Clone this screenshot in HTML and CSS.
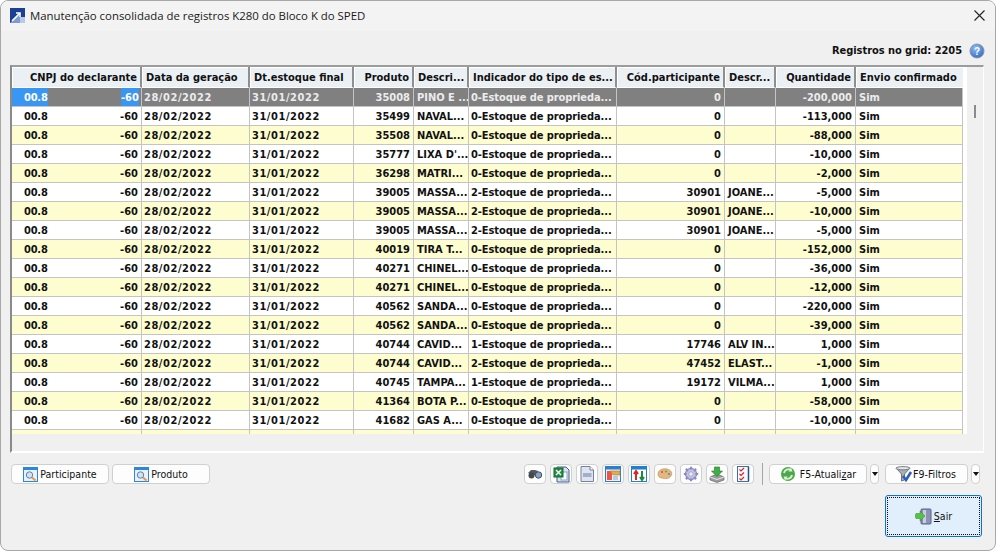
FILE: index.html
```html
<!DOCTYPE html>
<html lang="pt-BR">
<head>
<meta charset="utf-8">
<title>Manutenção consolidada</title>
<link rel="stylesheet" href="styles.css">
</head>
<body>
<div class="window">
  <header class="titlebar">
    <svg class="app-icon" width="15" height="15" viewBox="0 0 15 15"><rect width="15" height="15" fill="#1c3f94"/><path d="M0 15 L8 7 L10 9 L15 15Z" fill="#7f9bd0"/><path d="M2 13 L9 6 M6 5 H10 V9" stroke="#fff" stroke-width="1.6" fill="none"/><rect x="10" y="9" width="5" height="6" fill="#b9c8e6"/></svg>
    <span class="title">Manutenção consolidada de registros K280 do Bloco K do SPED</span>
    <svg class="close" width="11" height="11" viewBox="0 0 11 11"><path d="M.5 .5 L10.5 10.5 M10.5 .5 L.5 10.5" stroke="#222" stroke-width="1.1"/></svg>
  </header>
  <div class="info">
    <span class="count">Registros no grid: 2205</span>
    <svg width="16" height="16" viewBox="0 0 16 16"><defs><radialGradient id="hb" cx=".4" cy=".3" r=".8"><stop offset="0" stop-color="#8fc0f5"/><stop offset="1" stop-color="#2a62c0"/></radialGradient></defs><circle cx="8" cy="8" r="7" fill="url(#hb)" stroke="#8a94a5"/><text x="8" y="11.5" class="help-q">?</text></svg>
  </div>
  <div class="grid-frame">
    <div class="grid-view">
      <table class="grid">
        <colgroup><col class="c1"><col class="c2"><col class="c3"><col class="c4"><col class="c5"><col class="c6"><col class="c7"><col class="c8"><col class="c9"><col class="c10"></colgroup>
        <thead>
          <tr><th class="r">CNPJ do declarante</th><th>Data da geração</th><th>Dt.estoque final</th><th class="r">Produto</th><th>Descri...</th><th>Indicador do tipo de es...</th><th class="r">Cód.participante</th><th>Descr...</th><th class="r">Quantidade</th><th>Envio confirmado</th></tr>
        </thead>
        <tbody>
          <tr class="sel"><td class="cnpj"><span class="m a">00.8</span><span class="m b">-60</span></td><td class="d">28/02/2022</td><td class="d">31/01/2022</td><td class="r">35008</td><td>PINO E ...</td><td class="k">0-Estoque de proprieda...</td><td class="r">0</td><td></td><td class="r">-200,000</td><td>Sim</td></tr>
          <tr><td class="cnpj"><span class="m a">00.8</span><span class="m b">-60</span></td><td class="d">28/02/2022</td><td class="d">31/01/2022</td><td class="r">35499</td><td>NAVAL...</td><td class="k">0-Estoque de proprieda...</td><td class="r">0</td><td></td><td class="r">-113,000</td><td>Sim</td></tr>
          <tr class="y"><td class="cnpj"><span class="m a">00.8</span><span class="m b">-60</span></td><td class="d">28/02/2022</td><td class="d">31/01/2022</td><td class="r">35508</td><td>NAVAL...</td><td class="k">0-Estoque de proprieda...</td><td class="r">0</td><td></td><td class="r">-88,000</td><td>Sim</td></tr>
          <tr><td class="cnpj"><span class="m a">00.8</span><span class="m b">-60</span></td><td class="d">28/02/2022</td><td class="d">31/01/2022</td><td class="r">35777</td><td>LIXA D'...</td><td class="k">0-Estoque de proprieda...</td><td class="r">0</td><td></td><td class="r">-10,000</td><td>Sim</td></tr>
          <tr class="y"><td class="cnpj"><span class="m a">00.8</span><span class="m b">-60</span></td><td class="d">28/02/2022</td><td class="d">31/01/2022</td><td class="r">36298</td><td>MATRI...</td><td class="k">0-Estoque de proprieda...</td><td class="r">0</td><td></td><td class="r">-2,000</td><td>Sim</td></tr>
          <tr><td class="cnpj"><span class="m a">00.8</span><span class="m b">-60</span></td><td class="d">28/02/2022</td><td class="d">31/01/2022</td><td class="r">39005</td><td>MASSA...</td><td class="k">2-Estoque de proprieda...</td><td class="r">30901</td><td>JOANE...</td><td class="r">-5,000</td><td>Sim</td></tr>
          <tr class="y"><td class="cnpj"><span class="m a">00.8</span><span class="m b">-60</span></td><td class="d">28/02/2022</td><td class="d">31/01/2022</td><td class="r">39005</td><td>MASSA...</td><td class="k">2-Estoque de proprieda...</td><td class="r">30901</td><td>JOANE...</td><td class="r">-10,000</td><td>Sim</td></tr>
          <tr><td class="cnpj"><span class="m a">00.8</span><span class="m b">-60</span></td><td class="d">28/02/2022</td><td class="d">31/01/2022</td><td class="r">39005</td><td>MASSA...</td><td class="k">2-Estoque de proprieda...</td><td class="r">30901</td><td>JOANE...</td><td class="r">-5,000</td><td>Sim</td></tr>
          <tr class="y"><td class="cnpj"><span class="m a">00.8</span><span class="m b">-60</span></td><td class="d">28/02/2022</td><td class="d">31/01/2022</td><td class="r">40019</td><td>TIRA T...</td><td class="k">0-Estoque de proprieda...</td><td class="r">0</td><td></td><td class="r">-152,000</td><td>Sim</td></tr>
          <tr><td class="cnpj"><span class="m a">00.8</span><span class="m b">-60</span></td><td class="d">28/02/2022</td><td class="d">31/01/2022</td><td class="r">40271</td><td>CHINEL...</td><td class="k">0-Estoque de proprieda...</td><td class="r">0</td><td></td><td class="r">-36,000</td><td>Sim</td></tr>
          <tr class="y"><td class="cnpj"><span class="m a">00.8</span><span class="m b">-60</span></td><td class="d">28/02/2022</td><td class="d">31/01/2022</td><td class="r">40271</td><td>CHINEL...</td><td class="k">0-Estoque de proprieda...</td><td class="r">0</td><td></td><td class="r">-12,000</td><td>Sim</td></tr>
          <tr><td class="cnpj"><span class="m a">00.8</span><span class="m b">-60</span></td><td class="d">28/02/2022</td><td class="d">31/01/2022</td><td class="r">40562</td><td>SANDA...</td><td class="k">0-Estoque de proprieda...</td><td class="r">0</td><td></td><td class="r">-220,000</td><td>Sim</td></tr>
          <tr class="y"><td class="cnpj"><span class="m a">00.8</span><span class="m b">-60</span></td><td class="d">28/02/2022</td><td class="d">31/01/2022</td><td class="r">40562</td><td>SANDA...</td><td class="k">0-Estoque de proprieda...</td><td class="r">0</td><td></td><td class="r">-39,000</td><td>Sim</td></tr>
          <tr><td class="cnpj"><span class="m a">00.8</span><span class="m b">-60</span></td><td class="d">28/02/2022</td><td class="d">31/01/2022</td><td class="r">40744</td><td>CAVID...</td><td class="k">1-Estoque de proprieda...</td><td class="r">17746</td><td>ALV IN...</td><td class="r">1,000</td><td>Sim</td></tr>
          <tr class="y"><td class="cnpj"><span class="m a">00.8</span><span class="m b">-60</span></td><td class="d">28/02/2022</td><td class="d">31/01/2022</td><td class="r">40744</td><td>CAVID...</td><td class="k">2-Estoque de proprieda...</td><td class="r">47452</td><td>ELAST...</td><td class="r">-1,000</td><td>Sim</td></tr>
          <tr><td class="cnpj"><span class="m a">00.8</span><span class="m b">-60</span></td><td class="d">28/02/2022</td><td class="d">31/01/2022</td><td class="r">40745</td><td>TAMPA...</td><td class="k">1-Estoque de proprieda...</td><td class="r">19172</td><td>VILMA...</td><td class="r">1,000</td><td>Sim</td></tr>
          <tr class="y"><td class="cnpj"><span class="m a">00.8</span><span class="m b">-60</span></td><td class="d">28/02/2022</td><td class="d">31/01/2022</td><td class="r">41364</td><td>BOTA P...</td><td class="k">0-Estoque de proprieda...</td><td class="r">0</td><td></td><td class="r">-58,000</td><td>Sim</td></tr>
          <tr><td class="cnpj"><span class="m a">00.8</span><span class="m b">-60</span></td><td class="d">28/02/2022</td><td class="d">31/01/2022</td><td class="r">41682</td><td>GAS A...</td><td class="k">0-Estoque de proprieda...</td><td class="r">0</td><td></td><td class="r">-10,000</td><td>Sim</td></tr>
          <tr class="y"><td></td><td></td><td></td><td></td><td></td><td></td><td></td><td></td><td></td><td></td></tr>
        </tbody>
      </table>
    </div>
    <div class="scroll"><span class="thumb"></span></div>
  </div>
  <div class="toolbar">
    <div class="tool-left">
      <button class="btn wide"><svg width="15" height="15" viewBox="0 0 15 15"><rect x=".5" y=".5" width="14" height="14" fill="#e9f1fb" stroke="#2b86e0"/><rect x="1" y="1" width="13" height="2" fill="#2b86e0"/><circle cx="6.5" cy="8" r="3.2" fill="#cfe3f5" stroke="#6a7f99"/><path d="M9 10.5 L12.5 13.5" stroke="#e39a4a" stroke-width="2"/></svg><span>Participante</span></button>
      <button class="btn wide"><svg width="15" height="15" viewBox="0 0 15 15"><rect x=".5" y=".5" width="14" height="14" fill="#e9f1fb" stroke="#2b86e0"/><rect x="1" y="1" width="13" height="2" fill="#2b86e0"/><circle cx="6.5" cy="8" r="3.2" fill="#cfe3f5" stroke="#6a7f99"/><path d="M9 10.5 L12.5 13.5" stroke="#e39a4a" stroke-width="2"/></svg><span>Produto</span></button>
    </div>
    <div class="tool-right">
      <button class="btn ico"><svg width="16" height="12" viewBox="0 0 16 12"><path d="M1 5 L4 2 H8 L11 3 L10 7 H5Z" fill="#55585c"/><circle cx="4.5" cy="7.5" r="3" fill="#45484c"/><circle cx="11.5" cy="7" r="3.2" fill="#7fa3cc" stroke="#4a4d52"/></svg></button>
      <button class="btn ico"><svg width="17" height="17" viewBox="0 0 17 17"><path d="M4 1 H13 L16 4 V16 H4Z" fill="#d7e2f2" stroke="#445d8c"/><rect x="8" y="6" width="6" height="8" fill="#fff" stroke="#8aa2c4"/><rect x="1" y="2" width="9" height="9" fill="#1f8f3f" stroke="#136a2c"/><path d="M3 4 L8 9 M8 4 L3 9" stroke="#fff" stroke-width="1.4"/></svg></button>
      <button class="btn ico"><svg width="14" height="16" viewBox="0 0 14 16"><path d="M1 .5 H10 L13.5 4 V15.5 H1Z" fill="#dfe4ee" stroke="#76819a"/><rect x="3" y="7" width="8.5" height="4" fill="#9fb0cc"/><path d="M10 .5 V4 H13.5" fill="#fff" stroke="#76819a"/></svg></button>
      <button class="btn ico"><svg width="16" height="16" viewBox="0 0 16 16"><rect x=".5" y=".5" width="15" height="15" fill="#f6f1ea" stroke="#2b7fd0"/><rect x="1" y="1" width="14" height="2.5" fill="#2b7fd0"/><rect x="2" y="5" width="5" height="9" fill="#e8574a"/><path d="M5 5 H15 V9 H9 L7 8Z" fill="#e2a957" stroke="#a87530" stroke-width=".6"/><path d="M8 11 H13 M8 13 H13" stroke="#7fa6d8"/></svg></button>
      <button class="btn ico"><svg width="16" height="16" viewBox="0 0 16 16"><rect x=".5" y=".5" width="15" height="15" fill="#fff" stroke="#1f7fd0"/><rect x="1" y="1" width="14" height="2.5" fill="#1f7fd0"/><path d="M5 14 V6 M3 8 L5 5 L7 8" stroke="#d62828" stroke-width="2" fill="none"/><path d="M11 5 V13 M9 11 L11 14 L13 11" stroke="#1a8a3a" stroke-width="2" fill="none"/></svg></button>
      <button class="btn ico"><svg width="16" height="12" viewBox="0 0 16 12"><path d="M1 6 C1 2 6 0 10 1 C14 2 16 5 14 8 C12 11 8 11 5 10 C2 10 1 8 1 6Z" fill="#e4b77d" stroke="#b98a4f" stroke-width=".6"/><circle cx="5" cy="4" r="1.1" fill="#d94f4f"/><circle cx="9" cy="3.5" r="1.1" fill="#5aa95a"/><circle cx="12" cy="6" r="1.1" fill="#5a80d0"/></svg></button>
      <button class="btn ico"><svg width="16" height="16" viewBox="0 0 16 16"><circle cx="8" cy="8" r="5.6" fill="#b8b9de" stroke="#7e80b0"/><path d="M8 .8 V15.2 M.8 8 H15.2 M2.9 2.9 L13.1 13.1 M13.1 2.9 L2.9 13.1" stroke="#8a8cbc" stroke-width="2.2"/><circle cx="8" cy="8" r="4.4" fill="#c3c4e4"/><circle cx="8" cy="8" r="2.2" fill="#ebebf6" stroke="#8a8cbc" stroke-width=".6"/></svg></button>
      <button class="btn ico"><svg width="16" height="17" viewBox="0 0 16 17"><path d="M1 11 L8 8 L15 11 V14 L8 16.5 L1 14Z" fill="#9a9c9f" stroke="#55575a" stroke-width=".6"/><path d="M1 11 L8 13.5 L15 11" fill="none" stroke="#e8e8e8"/><path d="M5.5 1 H10.5 V5 H13.5 L8 10.5 L2.5 5 H5.5Z" fill="#3cb043" stroke="#1e7a28" stroke-width=".6"/></svg></button>
      <button class="btn ico"><svg width="14" height="16" viewBox="0 0 14 16"><rect x="1.5" y=".5" width="11" height="15" fill="#f5f7fb" stroke="#3c6fb0"/><path d="M12.5 1 V15" stroke="#2a4f90" stroke-width="1.5"/><path d="M3.5 3.5 L5 5 L8 2 M3.5 8 L5 9.5 L8 6.5 M3.5 12.5 L5 14 L8 11" fill="none" stroke="#d22" stroke-width="1.2"/></svg></button>
      <span class="sep"></span>
      <button class="btn f5"><svg width="16" height="16" viewBox="0 0 16 16"><circle cx="8" cy="8" r="7" fill="#4ca84a"/><path d="M4 7 A4.5 4.5 0 0 1 11 4 M12 9 A4.5 4.5 0 0 1 5 12" stroke="#d8f0d0" stroke-width="2" fill="none"/><path d="M11 1.5 L12.5 5.5 L8.5 5.5Z M5 14.5 L3.5 10.5 L7.5 10.5Z" fill="#d8f0d0"/></svg><span>F5-Atuali<u>z</u>ar</span></button>
      <button class="btn drop"><span class="arrow"></span></button>
      <button class="btn f9"><svg width="18" height="16" viewBox="0 0 18 16"><path d="M1 2 H15 L9.5 8 V14 L6.5 15 V8Z" fill="#a9aeb5" stroke="#6f747b"/><ellipse cx="8" cy="2.2" rx="7" ry="1.6" fill="#e4e6ea" stroke="#7b8087"/><path d="M8 10 L11 14 L16 6" stroke="#2a5fc0" stroke-width="2.6" fill="none"/></svg><span>F9-Filtros</span></button>
      <button class="btn drop"><span class="arrow"></span></button>
    </div>
  </div>
  <div class="footer">
    <button class="btn sair"><span class="focus"><svg width="17" height="17" viewBox="0 0 17 17"><rect x="6" y="1" width="10" height="15" rx="1" fill="#8c93b5" stroke="#5a6088"/><rect x="8" y="2" width="3" height="13" fill="#c9cde2"/><path d="M0 8.5 L1 6 H5 V3.5 L10 8.5 L5 13.5 V11 H1Z" transform="translate(0 -.5)" fill="#58bf47" stroke="#2f8a2a" stroke-width=".5"/></svg><span><u>S</u>air</span></span></button>
  </div>
</div>
</body>
</html>
```
FILE: styles.css
```css
* { box-sizing: border-box; }
html, body { margin: 0; padding: 0; height: 100%; background: #fff; }
body { overflow: hidden; }
.window {
  width: 996px; height: 551px;
  background: #f0f0f0;
  border: 1px solid #a8a8a8;
  border-radius: 8px;
  overflow: hidden;
  display: flex; flex-direction: column;
  font-family: "Noto Sans", "Open Sans", sans-serif;
  color: #111;
}
.titlebar {
  height: 30px; flex: none;
  background: #f3f3f3;
  display: flex; align-items: center;
  padding: 0 10px 2px 9px;
}
.app-icon { flex: none; }
.title { margin-left: 5px; font-size: 11.4px; font-family: "Open Sans", sans-serif; color: #1a1a1a; flex: 1; }
.info {
  height: 34px; flex: none;
  display: flex; justify-content: flex-end; align-items: center; gap: 7px;
  padding: 5px 10px 0 0;
}
.count, .grid { font-family: "DejaVu Sans", sans-serif; font-stretch: condensed; font-weight: 700; font-size: 11px; }
.count { color: #111; letter-spacing: -.05px; }
.help-q { font: 700 10px "Liberation Sans", sans-serif; fill: #fff; text-anchor: middle; }
.grid-frame {
  flex: none;
  margin-left: 9px; width: 974px; height: 388px;
  background: #f0f0f0;
  border-top: 2px solid #9c9c9c;
  border-left: 2px solid #8a8a8a;
  border-right: 1px solid #fff;
  border-bottom: 2px solid #fff;
  display: flex;
}
.grid-view { width: 955px; height: 367px; overflow: hidden; background: #fff; flex: none; }
.grid { border-collapse: separate; border-spacing: 0; table-layout: fixed; width: 951px; }
.c1 { width: 130px; } .c2 { width: 108px; } .c3 { width: 104px; } .c4 { width: 60px; } .c5 { width: 55px; }
.c6 { width: 148px; } .c7 { width: 108px; } .c8 { width: 51px; } .c9 { width: 80px; } .c10 { width: 107px; }
th {
  height: 21px; padding: 0 3px 0 4px; text-align: left; white-space: nowrap; overflow: hidden;
  background: #ebf0f5;
  border-right: 2px solid #8f8f8f;
  box-shadow: inset 1px 1px 0 #fff;
  border-bottom: 1px solid #fff;
  color: #111;
}
th:last-child { border-right: 0; }
th.r { text-align: right; }
td {
  height: 19px; padding: 0 3px; white-space: nowrap; overflow: hidden;
  background: #fff;
  border-right: 1px solid #c4c4c4; border-bottom: 1px solid #c4c4c4;
  color: #111;
}
td.r { text-align: right; }
td.d { padding-left: 2px; letter-spacing: .55px; }
td.k { padding-left: 2px; letter-spacing: -.08px; }
tr.y td { background: #fdfdd0; }
tr.sel td { background: #808080; color: #ececec; }
td.cnpj { padding: 0 2px 0 0; vertical-align: top; }
.m { display: inline-block; height: 18px; line-height: 19px; vertical-align: top; }
.m.a { padding-left: 12px; width: 36px; letter-spacing: -.2px; }
.m.b { width: 91px; text-align: right; padding-right: 1px; }
tr.sel .m { color: #fff; }
tr.sel .m.a { background: #3a96f3; }
tr.sel .m.b { width: 18px; margin-left: 73px; background: #3a96f3; }
.scroll { flex: 1; position: relative; background: #f0f0f0; }
.thumb { position: absolute; left: 7px; top: 38px; width: 2px; height: 13px; background: #8a8a8a; }
.toolbar {
  flex: none; margin-top: 11px; height: 20px;
  display: flex; justify-content: space-between;
  padding: 0 15px 0 10px;
}
.tool-left, .tool-right { display: flex; align-items: center; }
.tool-left { gap: 3px; }
.btn {
  height: 20px; padding: 0;
  background: #fdfdfd;
  border: 1px solid #d0d0d0;
  border-radius: 4px;
  display: inline-flex; align-items: center; justify-content: center;
  font-family: "DejaVu Sans", sans-serif; font-stretch: condensed; font-size: 10.5px; color: #111;
}
.btn svg { flex: none; }
.wide { width: 98px; gap: 2px; }
.ico { width: 22px; margin-right: 4px; }
.sep { width: 1px; height: 22px; background: #a6a6a6; margin: 0 6px 0 4px; }
.f5 { width: 98px; gap: 4px; }
.drop { width: 9px; margin: 0 6px 0 3px; }
.f9 { width: 83px; gap: 0; padding-right: 2px; }
.drop:last-child { margin-right: 0; }
.arrow { width: 0; height: 0; border: 3px solid transparent; border-top: 4px solid #111; border-bottom: 0; }
.footer { flex: none; margin-top: 11px; display: flex; justify-content: flex-end; padding-right: 13px; }
.sair {
  width: 97px; height: 42px; padding: 1px;
  background: #e1eefb; border: 1px solid #0a74d0; border-radius: 3px;
}
.focus {
  width: 100%; height: 100%;
  border: 1px dotted #111;
  display: flex; align-items: center; justify-content: center; gap: 2px;
}
```
